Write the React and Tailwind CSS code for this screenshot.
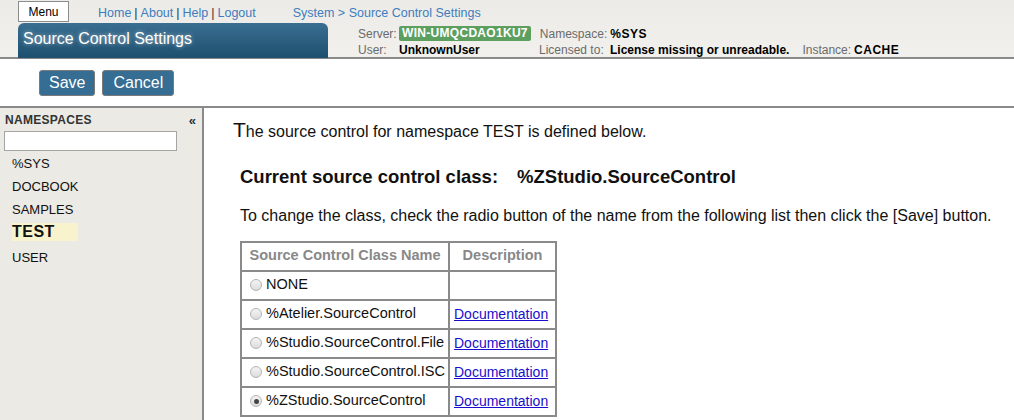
import React from "react";

const rows = [
  { name: "NONE", doc: false, checked: false },
  { name: "%Atelier.SourceControl", doc: true, checked: false },
  { name: "%Studio.SourceControl.File", doc: true, checked: false },
  { name: "%Studio.SourceControl.ISC", doc: true, checked: false },
  { name: "%ZStudio.SourceControl", doc: true, checked: true },
];

const namespaces = ["%SYS", "DOCBOOK", "SAMPLES", "TEST", "USER"];

function Radio({ checked }) {
  return (
    <span className="inline-flex w-[12px] h-[12px] rounded-full border border-[#b5b5b5] bg-gradient-to-b from-[#f4f4f4] to-[#dcdcdc] items-center justify-center mr-[4px] shrink-0">
      {checked && <span className="w-[5px] h-[5px] rounded-full bg-[#444]" />}
    </span>
  );
}

export default function App() {
  return (
    <div className="w-[1014px] h-[420px] overflow-hidden bg-white font-['Liberation_Sans',Arial,sans-serif] text-black flex flex-col">
      {/* header */}
      <div className="h-[59px] shrink-0 bg-gradient-to-b from-[#ecebe7] to-[#f1f0ec] border-b-2 border-[#8a8a8a] flex flex-col">
        <div className="h-[24px] flex items-start pl-[18px] pt-[1px] text-[12.5px]">
          <div className="w-[51px] h-[21px] bg-white border border-[#8c8c8c] flex items-center justify-center text-[12px] text-black">
            Menu
          </div>
          <div className="ml-[29px] mt-[3px] text-[#3d7dbe] flex gap-[3px]">
            <span>Home</span>
            <span className="text-[#333]">|</span>
            <span>About</span>
            <span className="text-[#333]">|</span>
            <span>Help</span>
            <span className="text-[#333]">|</span>
            <span>Logout</span>
          </div>
          <div className="ml-[37px] mt-[3px] text-[#3d7dbe]">System &gt; Source Control Settings</div>
        </div>
        <div className="flex flex-1 pl-[18px]">
          <div className="w-[310px] rounded-t-[6px] bg-gradient-to-b from-[#3a6f92] to-[#1d4f6e] text-white text-[16px] pl-[5px] pt-[4px] [text-shadow:0_0_4px_rgba(255,255,255,0.6)]">
            Source Control Settings
          </div>
          <div className="ml-[30px] flex flex-col text-[12px] pt-[3px]">
            <div className="flex items-center h-[16px]">
              <span className="w-[41px] text-[#6b6b6b]">Server:</span>
              <span className="bg-[#5c9f5f] text-white font-bold px-[3px] leading-[15px] rounded-[2px] tracking-[0.3px]">
                WIN-UMQCDAO1KU7
              </span>
              <span className="ml-[9px] text-[#6b6b6b]">Namespace:</span>
              <span className="ml-[3px] font-bold tracking-[0.5px]">%SYS</span>
            </div>
            <div className="flex items-center h-[16px]">
              <span className="w-[41px] text-[#6b6b6b]">User:</span>
              <span className="w-[140px] font-bold">UnknownUser</span>
              <span className="w-[71px] text-[#6b6b6b]">Licensed to:</span>
              <span className="font-bold">License missing or unreadable.</span>
              <span className="ml-[13px] text-[#6b6b6b]">Instance:</span>
              <span className="ml-[3px] font-bold tracking-[0.5px]">CACHE</span>
            </div>
          </div>
        </div>
      </div>

      {/* command bar */}
      <div className="h-[49px] shrink-0 border-b-2 border-[#8a8a8a] flex items-center gap-[7px] pl-[39px] pt-[1px]">
        <button className="h-[26px] px-[9px] rounded-[3px] bg-[#356d93] border border-[#7a7a7a] text-white text-[16px] leading-none">
          Save
        </button>
        <button className="h-[26px] px-[10px] rounded-[3px] bg-[#356d93] border border-[#7a7a7a] text-white text-[16px] leading-none">
          Cancel
        </button>
      </div>

      <div className="flex flex-1 min-h-0">
        {/* sidebar */}
        <div className="w-[204px] shrink-0 bg-[#ebeae4] border-r-2 border-[#8a8a8a] pt-[3px]">
          <div className="flex items-center justify-between pl-[5px] pr-[6px]">
            <span className="text-[12px] font-bold text-[#333] tracking-[0.3px]">NAMESPACES</span>
            <span className="text-[13px] font-bold text-[#234] leading-none">«</span>
          </div>
          <div className="ml-[4px] mt-[2px] w-[173px] h-[20px] bg-white border border-[#a5a5a5]" />
          <div className="pl-[12px] mt-[1px] flex flex-col text-[13px] text-[#111]">
            {namespaces.map((ns) =>
              ns === "TEST" ? (
                <span key={ns} className="w-[66px] h-[18px] mt-[2px] mb-[5px] bg-[#f8f3cc] font-bold text-[16px] leading-[18px] tracking-[0.5px]">
                  {ns}
                </span>
              ) : (
                <span key={ns} className="h-[23px] leading-[23px]">{ns}</span>
              )
            )}
          </div>
        </div>

        {/* main */}
        <div className="flex-1 pl-[29px] pt-[10px]">
          <div className="text-[16px] text-[#111] leading-[24px]">
            <span className="text-[21px]">T</span>he source control for namespace TEST is defined below.
          </div>
          <div className="ml-[7px] mt-[19px] text-[18.5px] font-bold text-[#111]">
            Current source control class:<span className="ml-[19px]">%ZStudio.SourceControl</span>
          </div>
          <div className="ml-[7px] mt-[13px] text-[16px] text-[#111]">
            To change the class, check the radio button of the name from the following list then click the [Save] button.
          </div>
          <table className="ml-[7px] mt-[13px] border-collapse border-2 border-[#8a8a8a]">
            <thead>
              <tr className="h-[29px]">
                <th className="w-[208px] border-2 border-[#8a8a8a] text-[#888] font-bold text-[14.5px] px-[4px]">
                  Source Control Class Name
                </th>
                <th className="w-[107px] border-2 border-[#8a8a8a] text-[#888] font-bold text-[14.5px] px-[4px]">
                  Description
                </th>
              </tr>
            </thead>
            <tbody>
              {rows.map((r) => (
                <tr key={r.name} className="h-[29px]">
                  <td className="border-2 border-[#8a8a8a] pl-[8px] pr-[2px] text-[14.5px]">
                    <div className="flex items-center text-[#111]">
                      <Radio checked={r.checked} />
                      {r.name}
                    </div>
                  </td>
                  <td className="border-2 border-[#8a8a8a] px-[4px] text-[14px]">
                    {r.doc && <span className="text-[#1a0dcc] underline">Documentation</span>}
                  </td>
                </tr>
              ))}
            </tbody>
          </table>
        </div>
      </div>
    </div>
  );
}
